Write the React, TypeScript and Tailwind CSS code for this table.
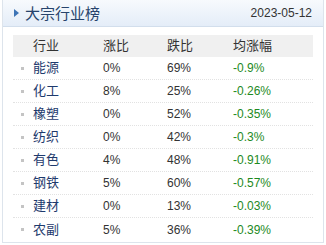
const rows = [
  { name: '能源', up: '0%', down: '69%', avg: '-0.9%' },
  { name: '化工', up: '8%', down: '25%', avg: '-0.26%' },
  { name: '橡塑', up: '0%', down: '52%', avg: '-0.35%' },
  { name: '纺织', up: '0%', down: '42%', avg: '-0.3%' },
  { name: '有色', up: '4%', down: '48%', avg: '-0.91%' },
  { name: '钢铁', up: '5%', down: '60%', avg: '-0.57%' },
  { name: '建材', up: '0%', down: '13%', avg: '-0.03%' },
  { name: '农副', up: '5%', down: '36%', avg: '-0.39%' },
]

const cjk = "font-['Liberation_Sans','Noto_Sans_CJK_SC',sans-serif]"

export default function App() {
  return (
    <div className="w-[326px] h-[245px] bg-white">
      <div className="ml-[2px] w-[322px] h-[243px] border border-[#dde4ec] border-t-0 flex flex-col">
        {/* Header */}
        <div className="h-[27px] flex items-center justify-between pl-[11px] pr-[11px] bg-gradient-to-b from-[#f7fafd] to-[#e4edf8] border-b border-[#d2deec]">
          <div className="flex items-center gap-[6px]">
            <svg width="5" height="8" viewBox="0 0 5 8">
              <path d="M0 0 L5 4 L0 8 Z" fill="#3d74b6" />
            </svg>
            <span className={`text-[15px] text-[#27436b] leading-none ${cjk}`}>大宗行业榜</span>
          </div>
          <span className="text-[12px] text-[#333] font-['Liberation_Sans',sans-serif] leading-none">
            2023-05-12
          </span>
        </div>

        {/* Table */}
        <div className="mt-[8px] ml-[10px] w-[300px]">
          <div className={`h-[22px] grid grid-cols-[90px_64px_66px_80px] items-center bg-[#f0f0f0] text-[13px] text-[#333] ${cjk}`}>
            <span className="pl-[20px]">行业</span>
            <span>涨比</span>
            <span>跌比</span>
            <span>均涨幅</span>
          </div>
          {rows.map((r, i) => (
            <div
              key={r.name}
              className={[
                'h-[23px] grid grid-cols-[90px_64px_66px_80px] items-center',
                i < rows.length - 1 ? 'border-b border-dotted border-[#e2e2e2]' : '',
              ].join(' ')}
            >
              <div className="flex items-center">
                <span className="ml-[8px] w-[3px] h-[3px] bg-[#c4c4c4]" />
                <span className={`ml-[9px] text-[13px] text-[#1e3a6d] ${cjk}`}>{r.name}</span>
              </div>
              <span className="text-[12px] text-[#333] font-['Liberation_Sans',sans-serif]">{r.up}</span>
              <span className="text-[12px] text-[#333] font-['Liberation_Sans',sans-serif]">{r.down}</span>
              <span className="text-[12px] text-[#1e8a1e] font-['Liberation_Sans',sans-serif]">{r.avg}</span>
            </div>
          ))}
        </div>
      </div>
    </div>
  )
}
